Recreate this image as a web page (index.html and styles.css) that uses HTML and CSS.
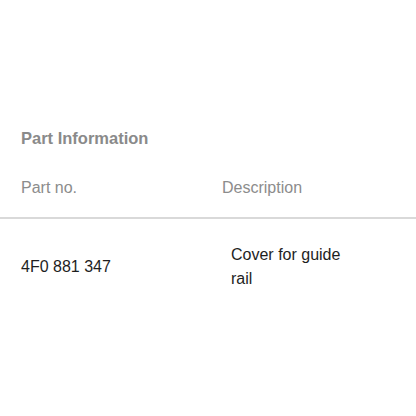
FILE: index.html
```html
<!DOCTYPE html>
<html>
<head>
    <title>Part Information</title>
    <link rel="stylesheet" href="styles.css">
</head>
<body>
    <div class="part-container">
        <h3 class="part-title">Part Information</h3>
        <div class="part-row part-head">
            <div class="col-no">Part no.</div>
            <div class="col-desc">Description</div>
        </div>
        <div class="part-row part-data">
            <div class="col-no">4F0 881 347</div>
            <div class="col-desc">Cover for guide rail</div>
        </div>
    </div>
</body>
</html>
```

FILE: styles.css
```css
body {
    margin: 0;
    font-family: "Liberation Sans", Arial, sans-serif;
    background-color: #fff;
}

.part-container {
    padding-top: 126px;
}

.part-title {
    margin: 0 0 26px 0;
    padding-left: 21px;
    font-size: 16.5px;
    line-height: 24px;
    font-weight: bold;
    color: #8a8a8a;
}

.part-row {
    display: grid;
    grid-template-columns: 201px 130px;
    align-items: center;
    padding-left: 21px;
    font-size: 16px;
    line-height: 24px;
}

.part-head {
    color: #8c8c8c;
    padding-bottom: 17px;
    border-bottom: 2px solid #d9d9d9;
}

.part-data {
    padding-top: 24px;
    color: #1e1e1e;
}

.part-data .col-desc {
    padding-left: 9px;
}
```
